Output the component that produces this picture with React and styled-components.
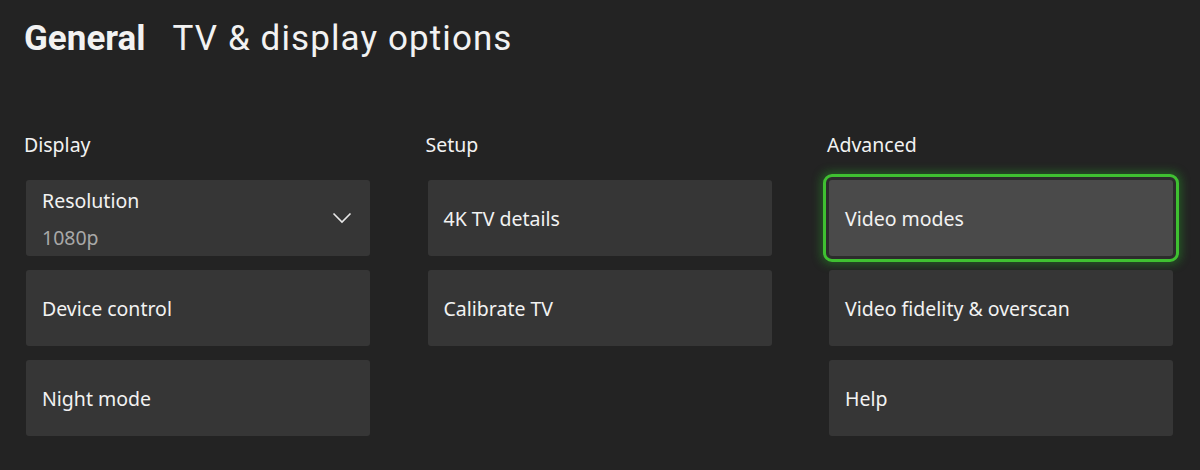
import React from 'react'
import styled, { createGlobalStyle } from 'styled-components'

const GlobalStyle = createGlobalStyle`
  body{
    margin: 0;
    background: #232323;
    font-family: "Noto Sans", "Open Sans", sans-serif;
    color: #f2f2f2;
  }
`

const Page = styled.div`
  width: 1200px;
  height: 470px;
  box-sizing: border-box;
  padding: 16px 0 0 26px;
  overflow: hidden;
`

const Title = styled.h1`
  margin: 0 0 0 -2px;
  font-family: Roboto, "Noto Sans", sans-serif;
  font-size: 35px;
  font-weight: 400;
  line-height: 46px;
  letter-spacing: 1.1px;
  b{
    font-weight: 700;
    margin-right: 27px;
    letter-spacing: 0;
  }
`

const Columns = styled.div`
  display: grid;
  grid-template-columns: repeat(3, 344px);
  column-gap: 57.5px;
  margin-top: 70px;
`

const Column = styled.section`
  display: flex;
  flex-direction: column;
  gap: 14px;
`

const Label = styled.div`
  margin-left: -2px;
  font-size: 19.5px;
  line-height: 26px;
  height: 26px;
  margin-bottom: 8px;
`

const Card = styled.div`
  position: relative;
  height: 76px;
  border-radius: 3px;
  background: ${p => p.focused ? '#4a4a4a' : '#363636'};
  display: flex;
  align-items: center;
  justify-content: space-between;
  padding: 0 18px 0 16px;
  font-size: 19.5px;
  ${p => p.focused && `
    outline: 3px solid #3fc031;
    outline-offset: 3px;
    box-shadow: 0 0 0 6px #2c2c2c, 0 0 10px 8px rgba(40,200,40,.35);
  `}
`

const Stack = styled.div`
  display: flex;
  flex-direction: column;
  gap: 10px;
  margin-top: 2px;
  .value{
    color: #a8a8a8;
  }
`

const Chevron = () => (
  <svg width="20" height="12" viewBox="0 0 20 12" fill="none">
    <path d="M1.5 1.5 L10 10 L18.5 1.5" stroke="#e8e8e8" strokeWidth="1.6" />
  </svg>
)

const App = () => {
  return (
    <Page>
      <GlobalStyle />
      <Title><b>General</b>TV &amp; display options</Title>
      <Columns>
        <Column>
          <Label>Display</Label>
          <Card>
            <Stack>
              <span>Resolution</span>
              <span className='value'>1080p</span>
            </Stack>
            <Chevron />
          </Card>
          <Card>Device control</Card>
          <Card>Night mode</Card>
        </Column>
        <Column>
          <Label>Setup</Label>
          <Card>4K TV details</Card>
          <Card>Calibrate TV</Card>
        </Column>
        <Column>
          <Label>Advanced</Label>
          <Card focused>Video modes</Card>
          <Card>Video fidelity &amp; overscan</Card>
          <Card>Help</Card>
        </Column>
      </Columns>
    </Page>
  )
}

export default App
